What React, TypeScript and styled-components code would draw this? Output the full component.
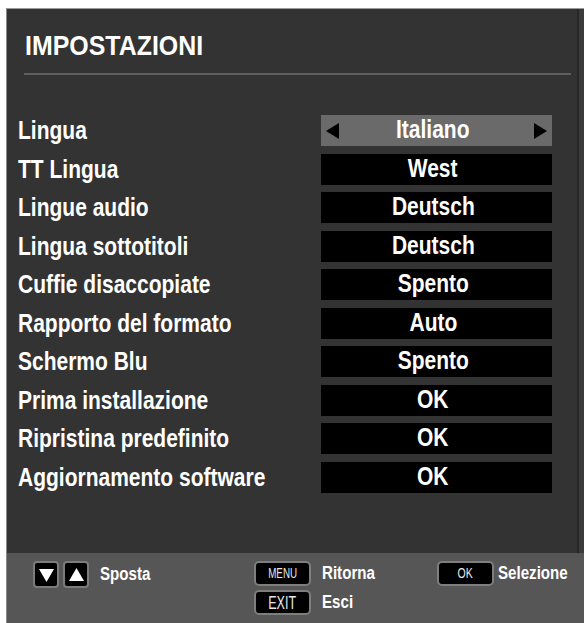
import styled, { createGlobalStyle } from 'styled-components';

const GlobalStyle = createGlobalStyle`
    html, body {
        margin: 0;
        padding: 0;
        background: #ffffff;
        overflow: hidden;
    }
    body {
        font-family: "Liberation Sans Narrow", "Liberation Sans", Arial, sans-serif;
    }
`;

// no narrow face is installed, so the condensed OSD look is made by squeezing the text
const Narrow: any = styled.span`
    display: inline-block;
    white-space: nowrap;
    transform: scaleX(${(props: any) => props.scale || 0.84});
    transform-origin: ${(props: any) => props.origin || 'left'} center;
`;

const Page = styled.div`
    width: 584px;
    height: 623px;
    padding: 8px 0 0 6px;
    box-sizing: border-box;
    overflow: hidden;
`;

const Panel = styled.div`
    height: 615px;
    display: flex;
    flex-direction: column;
    background: #333333;
    border-top: 1px solid #9a9a9a;
    border-left: 1px solid #8a8a8a;
    box-shadow: inset -5px 0 0 #3b3b3b, inset -7px 0 0 #262626;
    box-sizing: border-box;
`;

const Header = styled.div`
    padding: 21px 13px 0 17px;
`;

const Title = styled.div`
    color: #ffffff;
    font-weight: 700;
    font-size: 28px;
    line-height: 32px;
    padding-left: 1px;
`;

const Divider = styled.div`
    height: 2px;
    margin-top: 11px;
    background: #5f5f5f;
`;

const List = styled.div`
    flex: 1;
    display: grid;
    grid-auto-rows: 31px;
    row-gap: 7.5px;
    padding: 40px 32px 0 11px;
    align-content: start;
`;

const Row = styled.div`
    display: flex;
    align-items: center;
    justify-content: space-between;
`;

const Label = styled.div`
    color: #ffffff;
    font-weight: 700;
    font-size: 25px;
    line-height: 31px;
`;

const Value: any = styled.div`
    position: relative;
    width: 231px;
    height: 31px;
    padding-right: 7px;
    box-sizing: border-box;
    background: ${(props: any) => (props.active ? '#6a6a6a' : '#000000')};
    color: #ffffff;
    font-weight: 700;
    font-size: 25px;
    line-height: 29px;
    text-align: center;
`;

const Arrow: any = styled.svg`
    position: absolute;
    top: 8px;
    ${(props: any) => (props.side === 'left' ? 'left: 5px;' : 'right: 5px;')}
`;

const Footer = styled.div`
    height: 70px;
    flex-shrink: 0;
    display: grid;
    grid-template-columns: 221px 183px 1fr;
    padding: 8px 0 0 26px;
    background: #565656;
    box-sizing: border-box;
`;

const Group = styled.div`
    display: flex;
    flex-direction: column;
    gap: 4px;
`;

const Hint: any = styled.div`
    display: flex;
    align-items: center;
    gap: ${(props: any) => props.gap ?? 11}px;
`;

const NavKeys = styled.div`
    display: flex;
    gap: 4px;
`;

const NavKey = styled.div`
    width: 26px;
    height: 27px;
    background: #000000;
    border: 2px solid #7c7c7c;
    border-radius: 4px;
    box-sizing: border-box;
    display: flex;
    align-items: center;
    justify-content: center;
`;

const Key: any = styled.div`
    width: 57px;
    height: 25px;
    background: #000000;
    border: 2px solid #7e7e7e;
    border-radius: 5px;
    box-sizing: border-box;
    color: #e8e8e8;
    font-weight: 400;
    font-size: ${(props: any) => props.size || 14}px;
    line-height: 21px;
    text-align: center;
`;

const HintText = styled.div`
    color: #ffffff;
    font-weight: 700;
    font-size: 18px;
    line-height: 22px;
    margin-top: -2px;
`;

const settings = [
    { label: 'Lingua', value: 'Italiano', active: true },
    { label: 'TT Lingua', value: 'West' },
    { label: 'Lingue audio', value: 'Deutsch' },
    { label: 'Lingua sottotitoli', value: 'Deutsch' },
    { label: 'Cuffie disaccopiate', value: 'Spento' },
    { label: 'Rapporto del formato', value: 'Auto' },
    { label: 'Schermo Blu', value: 'Spento' },
    { label: 'Prima installazione', value: 'OK' },
    { label: 'Ripristina predefinito', value: 'OK' },
    { label: 'Aggiornamento software', value: 'OK' },
];

const Triangle = ({ dir }: { dir: 'up' | 'down' }) => (
    <svg width="17" height="16" viewBox="0 0 17 16">
        {dir === 'down' ? <path d="M1 2 H16 L8.5 15 Z" fill="#ffffff" /> : <path d="M1 14 H16 L8.5 1 Z" fill="#ffffff" />}
    </svg>
);

const App = () => {
    return (
        <Page>
            <GlobalStyle />
            <Panel>
                <Header>
                    <Title>
                        <Narrow scale={0.89}>IMPOSTAZIONI</Narrow>
                    </Title>
                    <Divider />
                </Header>
                <List>
                    {settings.map((item) => (
                        <Row key={item.label}>
                            <Label>
                                <Narrow>{item.label}</Narrow>
                            </Label>
                            <Value active={item.active}>
                                {item.active && (
                                    <Arrow side="left" width="13" height="16" viewBox="0 0 13 16">
                                        <path d="M0 8 L13 0 V16 Z" fill="#000000" />
                                    </Arrow>
                                )}
                                <Narrow origin="center">{item.value}</Narrow>
                                {item.active && (
                                    <Arrow side="right" width="13" height="16" viewBox="0 0 13 16">
                                        <path d="M13 8 L0 0 V16 Z" fill="#000000" />
                                    </Arrow>
                                )}
                            </Value>
                        </Row>
                    ))}
                </List>
                <Footer>
                    <Group>
                        <Hint>
                            <NavKeys>
                                <NavKey>
                                    <Triangle dir="down" />
                                </NavKey>
                                <NavKey>
                                    <Triangle dir="up" />
                                </NavKey>
                            </NavKeys>
                            <HintText>
                                <Narrow>Sposta</Narrow>
                            </HintText>
                        </Hint>
                    </Group>
                    <Group>
                        <Hint>
                            <Key>
                                <Narrow origin="center" scale={0.7}>MENU</Narrow>
                            </Key>
                            <HintText>
                                <Narrow>Ritorna</Narrow>
                            </HintText>
                        </Hint>
                        <Hint>
                            <Key size={19}>
                                <Narrow origin="center" scale={0.66}>EXIT</Narrow>
                            </Key>
                            <HintText>
                                <Narrow>Esci</Narrow>
                            </HintText>
                        </Hint>
                    </Group>
                    <Group>
                        <Hint gap={4}>
                            <Key>
                                <Narrow origin="center" scale={0.75}>OK</Narrow>
                            </Key>
                            <HintText>
                                <Narrow>Selezione</Narrow>
                            </HintText>
                        </Hint>
                    </Group>
                </Footer>
            </Panel>
        </Page>
    );
};

export default App;
